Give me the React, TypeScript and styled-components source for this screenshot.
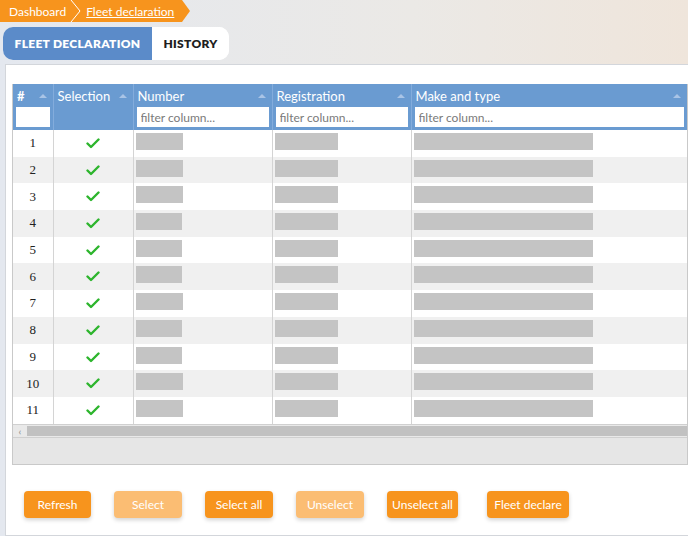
import * as React from 'react';
import styled, { createGlobalStyle } from 'styled-components';

const GlobalStyle = createGlobalStyle`
  html, body { margin: 0; padding: 0; }
  body {
    width: 688px;
    height: 536px;
    overflow: hidden;
    font-family: Lato, "Noto Sans", sans-serif;
    background: linear-gradient(90deg, #e4e8ef 0%, #ebe9e6 60%, #efe5db 100%);
  }
`;

type Row = { n: number; num: number; reg: number; make: number };

const rows: Row[] = [
  { n: 1, num: 47, reg: 63, make: 179 },
  { n: 2, num: 47, reg: 63, make: 179 },
  { n: 3, num: 47, reg: 63, make: 179 },
  { n: 4, num: 46, reg: 63, make: 179 },
  { n: 5, num: 46, reg: 63, make: 179 },
  { n: 6, num: 46, reg: 63, make: 179 },
  { n: 7, num: 47, reg: 63, make: 179 },
  { n: 8, num: 46, reg: 63, make: 179 },
  { n: 9, num: 46, reg: 63, make: 179 },
  { n: 10, num: 47, reg: 63, make: 179 },
  { n: 11, num: 47, reg: 63, make: 179 },
];

const buttons = [
  { label: 'Refresh', off: false, w: 67, gap: 0 },
  { label: 'Select', off: true, w: 68, gap: 23 },
  { label: 'Select all', off: false, w: 68, gap: 23 },
  { label: 'Unselect', off: true, w: 68, gap: 23 },
  { label: 'Unselect all', off: false, w: 71, gap: 23 },
  { label: 'Fleet declare', off: false, w: 82, gap: 29 },
];

const SortArrow = () => (
  <svg width="10" height="6" viewBox="0 0 10 6">
    <path d="M1 5 L5 1 L9 5 Z" fill="#a9c4e6" />
  </svg>
);

const Check = () => (
  <svg width="14" height="11" viewBox="0 0 14 11">
    <path d="M1.5 5.5 L5 9 L12.5 1.5" stroke="#2db52d" strokeWidth="2.4" fill="none" strokeLinecap="round" strokeLinejoin="round" />
  </svg>
);

const App = () => {
  return (
    <>
      <GlobalStyle />
      <Page>
        <Breadcrumb>
          <Crumb>Dashboard</Crumb>
          <Divider>
            <svg width="12" height="22" viewBox="0 0 12 22">
              <path d="M1 0 L10 11 L1 22" stroke="#ffffff" strokeWidth="1" fill="none" />
            </svg>
          </Divider>
          <CrumbLink>Fleet declaration</CrumbLink>
        </Breadcrumb>

        <Tabs>
          <Tab $active>FLEET DECLARATION</Tab>
          <Tab>HISTORY</Tab>
        </Tabs>

        <Panel>
          <TableBox>
            <Grid>
              <colgroup>
                <col style={{ width: 40 }} />
                <col style={{ width: 80 }} />
                <col style={{ width: 139 }} />
                <col style={{ width: 139 }} />
                <col />
              </colgroup>
              <thead>
                <tr>
                  <Th $bold>
                    <HeadLine><span>#</span><SortArrow /></HeadLine>
                    <Filter />
                  </Th>
                  <Th>
                    <HeadLine><span>Selection</span><SortArrow /></HeadLine>
                    <FilterSpacer />
                  </Th>
                  <Th>
                    <HeadLine><span>Number</span><SortArrow /></HeadLine>
                    <Filter placeholder="filter column..." />
                  </Th>
                  <Th>
                    <HeadLine><span>Registration</span><SortArrow /></HeadLine>
                    <Filter placeholder="filter column..." />
                  </Th>
                  <Th>
                    <HeadLine><span>Make and type</span><SortArrow /></HeadLine>
                    <Filter placeholder="filter column..." />
                  </Th>
                </tr>
              </thead>
              <tbody>
                {rows.map((r) => (
                  <Tr key={r.n} $odd={r.n % 2 === 0}>
                    <NumCell>{r.n}</NumCell>
                    <CheckCell><Check /></CheckCell>
                    <Td><Blank style={{ width: r.num }} /></Td>
                    <Td><Blank style={{ width: r.reg }} /></Td>
                    <Td><Blank style={{ width: r.make }} /></Td>
                  </Tr>
                ))}
              </tbody>
            </Grid>
            <ScrollBar>
              <ScrollArrow>‹</ScrollArrow>
              <ScrollThumb />
            </ScrollBar>
            <Footer />
          </TableBox>

          <Actions>
            {buttons.map((b) => (
              <ActionButton key={b.label} $off={b.off} $gap={b.gap} $w={b.w}>
                {b.label}
              </ActionButton>
            ))}
          </Actions>
        </Panel>
      </Page>
    </>
  );
};

const Page = styled.div`
  display: flex;
  flex-direction: column;
  height: 536px;
`;

const Breadcrumb = styled.div`
  display: flex;
  align-items: center;
  width: 190px;
  height: 22px;
  background: #f7941d;
  clip-path: polygon(0 0, 182px 0, 190px 11px, 182px 22px, 0 22px);
  padding-left: 9px;
  box-sizing: border-box;
  color: #ffffff;
  font-size: 12px;
`;

const Crumb = styled.span`
  margin-right: 4px;
`;

const Divider = styled.span`
  display: flex;
  margin-right: 4px;
`;

const CrumbLink = styled.span`
  text-decoration: underline;
`;

const Tabs = styled.div`
  display: flex;
  margin: 5px 0 0 3px;
  height: 33px;
  width: 226px;
  border-radius: 10px;
  background: #ffffff;
`;

const Tab = styled.div<{ $active?: boolean }>`
  display: flex;
  align-items: center;
  justify-content: center;
  white-space: nowrap;
  width: ${(p) => (p.$active ? '149px' : '77px')};
  box-sizing: border-box;
  font-size: 12px;
  font-weight: 800;
  letter-spacing: 0.3px;
  border-radius: 10px;
  ${(p) => (p.$active ? 'border-top-right-radius: 0; border-bottom-right-radius: 0;' : '')}
  background: ${(p) => (p.$active ? '#5b8bc9' : '#ffffff')};
  color: ${(p) => (p.$active ? '#ffffff' : '#1e1e1e')};
`;

const Panel = styled.div`
  margin: 4px 0 0 5px;
  flex: 1;
  background: #ffffff;
  border: 1px solid #d3d6db;
  border-right: none;
  padding: 19px 0 0 6px;
  display: flex;
  flex-direction: column;
`;

const TableBox = styled.div`
  border: 1px solid #c9c9c9;
  border-top: none;
  width: 676px;
  box-sizing: border-box;
`;

const Grid = styled.table`
  width: 100%;
  border-collapse: collapse;
  table-layout: fixed;
`;

const Th = styled.th<{ $bold?: boolean }>`
  background: #6a9bd1;
  color: #ffffff;
  text-align: left;
  vertical-align: top;
  padding: 3px;
  border-right: 1px solid #83acdc;
  font-size: 13px;
  font-weight: ${(p) => (p.$bold ? 700 : 400)};
  height: 46px;
  box-sizing: border-box;
  &:last-child { border-right: none; }
`;

const HeadLine = styled.div`
  display: flex;
  align-items: center;
  justify-content: space-between;
  height: 18px;
  padding: 0 2px 0 1px;
  margin-bottom: 2px;
`;

const Filter = styled.input`
  display: block;
  width: 100%;
  height: 20px;
  box-sizing: border-box;
  border: none;
  padding: 0 4px;
  font-family: Lato, "Noto Sans", sans-serif;
  font-size: 12px;
  color: #333;
  &::placeholder { color: #7a7a7a; }
`;

const FilterSpacer = styled.div`
  height: 20px;
`;

const Tr = styled.tr<{ $odd?: boolean }>`
  background: ${(p) => (p.$odd ? '#f0f0f0' : '#ffffff')};
  height: 26.7px;
`;

const Td = styled.td`
  padding: 3px 2px 0;
  height: 26.7px;
  box-sizing: border-box;
  vertical-align: top;
  border-right: 1px solid #d4d4d4;
  &:last-child { border-right: none; }
`;

const NumCell = styled(Td)`
  text-align: center;
  vertical-align: middle;
  padding: 0;
  font-family: "Liberation Serif", serif;
  font-size: 13px;
  color: #222222;
`;

const CheckCell = styled(Td)`
  text-align: center;
  padding-top: 3px;
`;

const Blank = styled.div`
  height: 17px;
  background: #c4c4c4;
`;

const ScrollBar = styled.div`
  display: flex;
  align-items: center;
  height: 12px;
  background: #e9e9e9;
  border-top: 1px solid #d0d0d0;
`;

const ScrollArrow = styled.span`
  width: 14px;
  font-size: 10px;
  line-height: 10px;
  color: #888;
  text-align: center;
`;

const ScrollThumb = styled.div`
  flex: 1;
  height: 10px;
  background: #c1c1c1;
`;

const Footer = styled.div`
  height: 26px;
  background: #e6e6e6;
  border-top: 1px solid #d0d0d0;
`;

const Actions = styled.div`
  display: flex;
  margin: 26px 0 0 12px;
`;

const ActionButton = styled.div<{ $off?: boolean; $gap: number; $w: number }>`
  width: ${(p) => p.$w}px;
  margin-left: ${(p) => p.$gap}px;
  height: 27px;
  border-radius: 4px;
  display: flex;
  align-items: center;
  justify-content: center;
  font-size: 12px;
  color: #ffffff;
  background: ${(p) => (p.$off ? '#fbbd73' : '#f7941d')};
  box-shadow: 0 2px 4px rgba(0, 0, 0, 0.18);
`;

export default App;
